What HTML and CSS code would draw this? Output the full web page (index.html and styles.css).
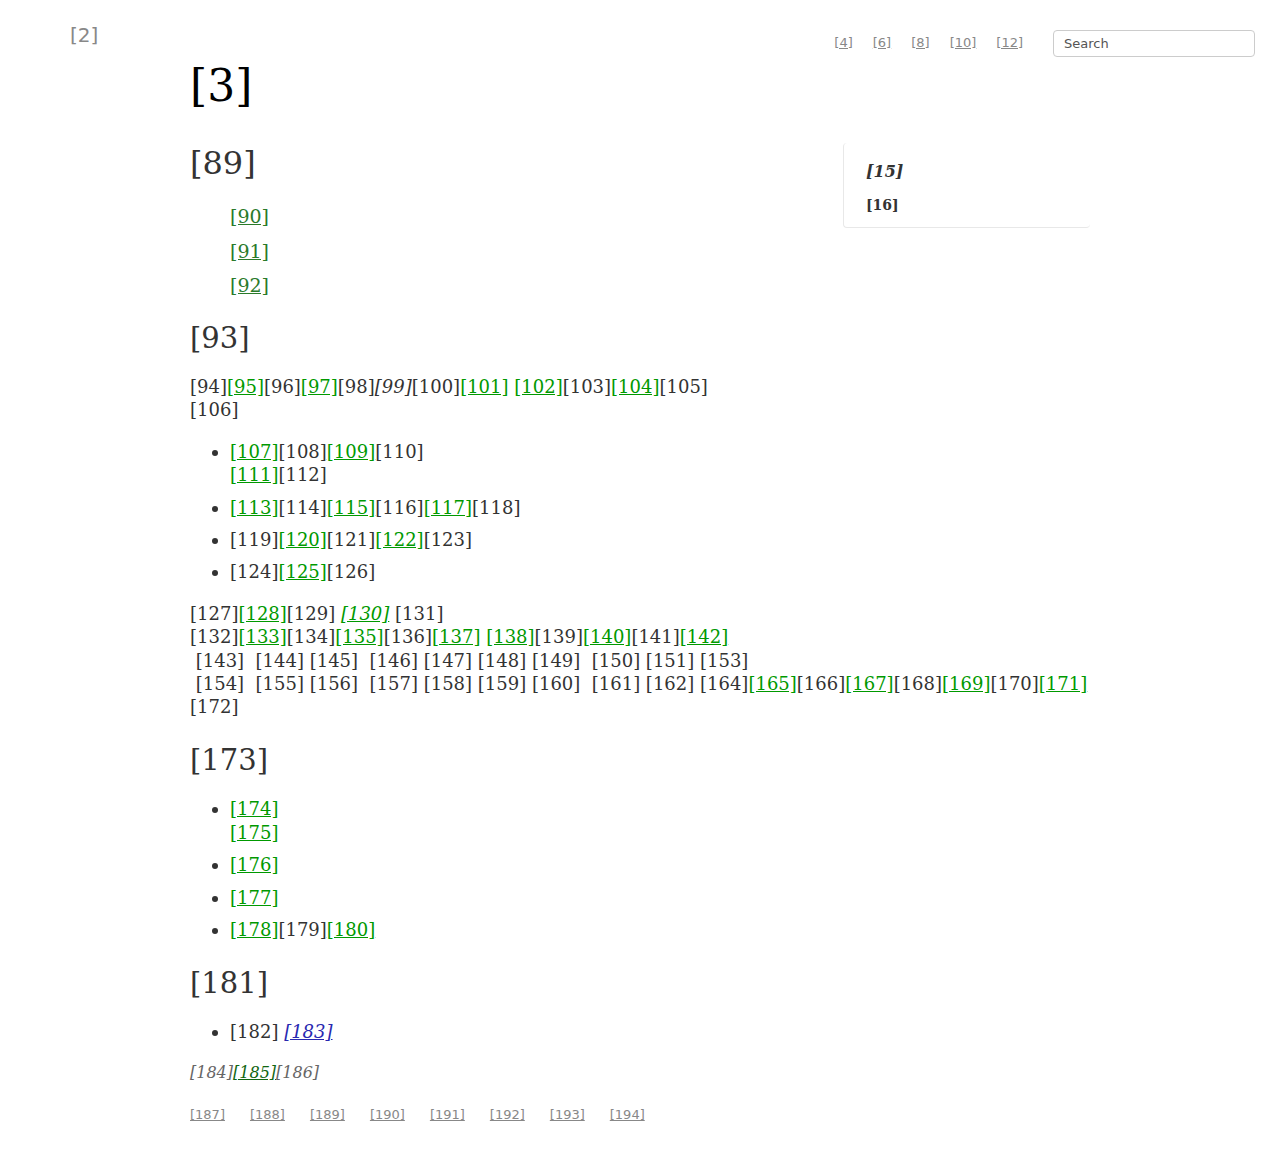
FILE: index.html
```html
<!DOCTYPE html>
<html>
<head>
<meta charset="utf-8">
<title>Page</title>
<link rel="stylesheet" href="styles.css">
</head>
<body>
<header class="topbar">
  <div class="brand">[2]</div>
  <nav class="nav">
    <a class="nav-link" href="#">[4]</a>
    <a class="nav-link" href="#">[6]</a>
    <a class="nav-link" href="#">[8]</a>
    <a class="nav-link" href="#">[10]</a>
    <a class="nav-link" href="#">[12]</a>
    <input class="search" type="text" placeholder="Search">
  </nav>
</header>
<main class="main">
  <h1 class="title">[3]</h1>
  <aside class="sidebar">
    <div class="side-title">[15]</div>
    <div class="side-item">[16]</div>
  </aside>
  <h2 class="sec first">[89]</h2>
  <ul class="toc">
    <li><a class="toc-link" href="#">[90]</a></li>
    <li><a class="toc-link" href="#">[91]</a></li>
    <li><a class="toc-link" href="#">[92]</a></li>
  </ul>
  <h2 class="sec after-toc">[93]</h2>
  <p class="para">[94]<a href="#">[95]</a>[96]<a href="#">[97]</a>[98]<em>[99]</em>[100]<a href="#">[101]</a> <a href="#">[102]</a>[103]<a href="#">[104]</a>[105]<br>[106]</p>
  <ul class="bullets">
    <li><a href="#">[107]</a>[108]<a href="#">[109]</a>[110]<br><a href="#">[111]</a>[112]</li>
    <li><a href="#">[113]</a>[114]<a href="#">[115]</a>[116]<a href="#">[117]</a>[118]</li>
    <li>[119]<a href="#">[120]</a>[121]<a href="#">[122]</a>[123]</li>
    <li>[124]<a href="#">[125]</a>[126]</li>
  </ul>
  <p class="para">[127]<a href="#">[128]</a>[129] <a href="#"><em>[130]</em></a> [131]<br>[132]<a href="#">[133]</a>[134]<a href="#">[135]</a>[136]<a href="#">[137]</a> <a href="#">[138]</a>[139]<a href="#">[140]</a>[141]<a href="#">[142]</a><br>&nbsp;[143]&nbsp; [144] [145]&nbsp; [146] [147] [148] [149]&nbsp; [150] [151] [153]<br>&nbsp;[154]&nbsp; [155] [156]&nbsp; [157] [158] [159] [160]&nbsp; [161] [162] [164]<a href="#">[165]</a>[166]<a href="#">[167]</a>[168]<a href="#">[169]</a>[170]<a href="#">[171]</a><br>[172]</p>
  <h2 class="sec">[173]</h2>
  <ul class="bullets">
    <li><a href="#">[174]</a><br><a href="#">[175]</a></li>
    <li><a href="#">[176]</a></li>
    <li><a href="#">[177]</a></li>
    <li><a href="#">[178]</a>[179]<a href="#">[180]</a></li>
  </ul>
  <h2 class="sec">[181]</h2>
  <ul class="bullets">
    <li>[182] <a class="blue" href="#"><em>[183]</em></a></li>
  </ul>
  <p class="para note">[184]<a class="dark" href="#">[185]</a>[186]</p>
  <footer class="footer">
    <a href="#">[187]</a>
    <a href="#">[188]</a>
    <a href="#">[189]</a>
    <a href="#">[190]</a>
    <a href="#">[191]</a>
    <a href="#">[192]</a>
    <a href="#">[193]</a>
    <a href="#">[194]</a>
  </footer>
</main>
</body>
</html>
```

FILE: styles.css
```css
html, body {
  margin: 0;
  padding: 0;
  background: #fff;
}
body {
  font-family: "DejaVu Serif", serif;
  color: #333;
  font-size: 18px;
  line-height: 23.4px;
}
.topbar {
  display: flex;
  justify-content: space-between;
  align-items: flex-start;
  padding: 24px 25px 0 70px;
  height: 33px;
}
.brand {
  font-family: "DejaVu Sans", sans-serif;
  font-size: 20px;
  line-height: 22px;
  color: #888;
}
.nav {
  display: flex;
  align-items: center;
  margin-top: 6px;
}
.nav-link {
  font-family: "DejaVu Sans", sans-serif;
  font-size: 13px;
  line-height: 16px;
  color: #888;
  margin-right: 20px;
  margin-top: -2px;
  text-decoration: underline;
}
.nav-link:last-of-type {
  margin-right: 30px;
}
.search {
  box-sizing: border-box;
  width: 202px;
  height: 27px;
  border: 1px solid #ccc;
  border-radius: 4px;
  padding: 0 10px;
  font-family: "DejaVu Sans", sans-serif;
  font-size: 13px;
  color: #555;
  outline: none;
}
.search::placeholder {
  color: #555;
}
.main {
  margin-left: 190px;
  width: 900px;
}
.title {
  font-size: 44px;
  font-weight: normal;
  line-height: 52px;
  color: #000;
  margin: 3px 0 31px;
}
.sidebar {
  float: right;
  box-sizing: border-box;
  width: 247px;
  height: 85px;
  padding: 19px 0 0 22px;
  border-left: 1px solid #e8e8e8;
  border-bottom: 1px solid #e8e8e8;
  border-radius: 4px;
}
.side-title {
  font-size: 16px;
  line-height: 20px;
  font-weight: bold;
  font-style: italic;
  color: #333;
}
.side-item {
  font-size: 14px;
  line-height: 20px;
  font-weight: bold;
  color: #333;
  margin-top: 13px;
}
.sec {
  font-size: 29px;
  font-weight: normal;
  line-height: 40px;
  color: #333;
  margin: 21.5px 0 17px;
}
.sec.first {
  font-size: 32px;
  margin-top: 0;
}
.sec.after-toc {
  margin-top: 20.5px;
}
a {
  color: #009900;
  text-decoration: underline;
}
.toc {
  list-style: none;
  margin: 22px 0 0;
  padding-left: 40px;
}
.toc li + li {
  margin-top: 11.1px;
}
.toc-link {
  font-size: 19px;
  color: #2a7a2a;
}
.para {
  margin: 0 0 18px;
}
.bullets {
  margin: 0 0 18px;
  padding-left: 40px;
}
.bullets li + li {
  margin-top: 9px;
}
em {
  font-style: italic;
}
.blue {
  color: #2828b0;
}
.note {
  font-size: 16px;
  line-height: 23px;
  font-style: italic;
  color: #666;
}
.dark {
  color: #116611;
}
.footer {
  display: flex;
  margin-top: 23px;
  padding-bottom: 30px;
}
.footer a {
  font-family: "DejaVu Sans", sans-serif;
  font-size: 13px;
  line-height: 16px;
  color: #888;
  margin-right: 25px;
}
```
